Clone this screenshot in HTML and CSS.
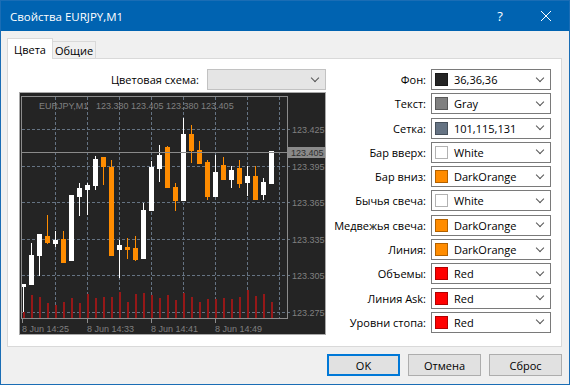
FILE: index.html
```html
<!DOCTYPE html>
<html lang="ru">
<head>
  <meta charset="UTF-8" />
  <meta name="viewport" content="width=device-width, initial-scale=1.0"/>
  <title>Свойства EURJPY,M1</title>
  <link rel="stylesheet" href="styles.css">
</head>
<body>
  <div class="window">
    <div class="titlebar">
      <span class="title">Свойства EURJPY,M1</span>
      <span class="caption-btn">?</span>
      <span class="caption-btn">
        <svg width="10" height="10" viewBox="0 0 10 10"><path d="M0 0L10 10M10 0L0 10" stroke="#fff" stroke-width="1"/></svg>
      </span>
    </div>

    <div class="content">
      <div class="tabs">
        <div class="tab active">Цвета</div>
        <div class="tab">Общие</div>
      </div>

      <div class="panel">
        <div class="left">
          <div class="scheme">
            <span>Цветовая схема:</span>
            <div class="combo disabled"><span class="value"></span></div>
          </div>
          <div class="chart">
            <svg id="chart" width="305" height="241" viewBox="20 93 305 241"></svg>
          </div>
        </div>

        <div class="colors">
          <label>Фон:</label>
          <div class="combo"><span class="swatch sw-bg"></span><span class="value">36,36,36</span></div>
          <label>Текст:</label>
          <div class="combo"><span class="swatch sw-gray"></span><span class="value">Gray</span></div>
          <label>Сетка:</label>
          <div class="combo"><span class="swatch sw-grid"></span><span class="value">101,115,131</span></div>
          <label>Бар вверх:</label>
          <div class="combo"><span class="swatch sw-white"></span><span class="value">White</span></div>
          <label>Бар вниз:</label>
          <div class="combo"><span class="swatch sw-orange"></span><span class="value">DarkOrange</span></div>
          <label>Бычья свеча:</label>
          <div class="combo"><span class="swatch sw-white"></span><span class="value">White</span></div>
          <label>Медвежья свеча:</label>
          <div class="combo"><span class="swatch sw-orange"></span><span class="value">DarkOrange</span></div>
          <label>Линия:</label>
          <div class="combo"><span class="swatch sw-orange"></span><span class="value">DarkOrange</span></div>
          <label>Объемы:</label>
          <div class="combo"><span class="swatch sw-red"></span><span class="value">Red</span></div>
          <label>Линия Ask:</label>
          <div class="combo"><span class="swatch sw-red"></span><span class="value">Red</span></div>
          <label>Уровни стопа:</label>
          <div class="combo"><span class="swatch sw-red"></span><span class="value">Red</span></div>
        </div>
      </div>

      <div class="buttons">
        <button class="default">OK</button>
        <button>Отмена</button>
        <button>Сброс</button>
      </div>
    </div>
  </div>

  <script>
    const NS = 'http://www.w3.org/2000/svg';
    const svg = document.getElementById('chart');

    // y in chart pixels: [high, bodyTop, bodyBottom, low, bullish]
    const bars = [
      [284, 284, 287, 312, 1], [243, 255, 285, 285, 1], [234, 234, 256, 276, 1], [215, 236, 243, 244, 0],
      [231, 240, 244, 247, 1], [231, 239, 263, 263, 0], [195, 195, 261, 261, 1], [183, 188, 197, 216, 1],
      [183, 185, 190, 215, 1], [156, 159, 186, 190, 1], [157, 157, 167, 185, 0], [160, 167, 256, 256, 0],
      [240, 245, 250, 278, 1], [238, 247, 250, 259, 0], [236, 248, 260, 261, 0], [203, 210, 259, 259, 1],
      [161, 167, 211, 211, 1], [145, 155, 169, 182, 1], [146, 147, 188, 188, 0], [183, 187, 201, 211, 0],
      [118, 134, 201, 201, 1], [125, 134, 151, 163, 0], [141, 150, 164, 164, 0], [160, 162, 197, 200, 0],
      [155, 172, 197, 197, 1], [157, 165, 180, 180, 0], [166, 170, 180, 188, 1], [160, 168, 184, 188, 0],
      [166, 176, 183, 196, 1], [166, 176, 200, 200, 0], [178, 182, 195, 200, 1], [151, 151, 184, 184, 1]
    ];

    const volumes = [312, 295, 297, 303, 305, 302, 298, 303, 294, 298, 297, 297, 292, 302, 294, 293,
                     295, 298, 295, 300, 293, 297, 302, 299, 299, 298, 299, 297, 290, 296, 294, 302];

    const levels = [
      [129, '123.425'], [165.6, '123.395'], [202.2, '123.365'],
      [238.8, '123.335'], [275.4, '123.305'], [312, '123.275']
    ];

    const times = [[22, '8 Jun 14:25'], [87, '8 Jun 14:33'], [151, '8 Jun 14:41'], [215, '8 Jun 14:49']];

    function add(parent, tag, attrs, text) {
      const node = document.createElementNS(NS, tag);
      for (const key in attrs) node.setAttribute(key, attrs[key]);
      if (text) node.textContent = text;
      parent.appendChild(node);
      return node;
    }

    const defs = add(svg, 'defs', {});
    const clip = add(defs, 'clipPath', { id: 'plot' });
    add(clip, 'rect', { x: 22, y: 97, width: 265, height: 221 });

    // grid
    const grid = add(svg, 'g', { stroke: '#657383', 'stroke-dasharray': '3 2', 'stroke-width': 1 });
    levels.forEach(([y]) => {
      const py = Math.round(y) + 0.5;
      add(grid, 'line', { x1: 22, x2: 292, y1: py, y2: py });
    });
    for (let i = 4; i < 36; i += 4) {
      const px = 23.5 + i * 8;
      add(grid, 'line', { x1: px, x2: px, y1: 97, y2: 318 });
    }

    const plot = add(svg, 'g', { 'clip-path': 'url(#plot)' });

    volumes.forEach((top, i) => {
      add(plot, 'rect', { x: 23 + i * 8, y: top, width: 2, height: 319 - top, fill: '#961818' });
    });

    bars.forEach(([hi, top, bot, lo, up], i) => {
      const x = 21 + i * 8;
      const color = up ? '#ffffff' : '#ff8c00';
      add(plot, 'rect', { x: x + 2, y: hi, width: 1, height: lo - hi, fill: color });
      add(plot, 'rect', { x: x, y: top, width: 5, height: Math.max(1, bot - top), fill: color });
    });

    // bid line and frame
    add(svg, 'line', { x1: 22, x2: 287, y1: 152.5, y2: 152.5, stroke: '#8a8a8a' });
    add(svg, 'rect', { x: 21.5, y: 96.5, width: 266, height: 222, fill: 'none', stroke: '#8c8c8c' });

    times.forEach(([x]) => {
      add(svg, 'line', { x1: x + 0.5, x2: x + 0.5, y1: 319, y2: 323, stroke: '#8c8c8c' });
    });

    const labels = add(svg, 'g', { 'font-family': 'Liberation Sans, Arial, sans-serif', 'font-size': 9, fill: '#808080' });
    add(labels, 'text', { x: 39, y: 108.5 }, 'EURJPY,M1');
    add(labels, 'text', { x: 96, y: 108.5 }, '123.380 123.405 123.380 123.405');
    levels.forEach(([y, price]) => add(labels, 'text', { x: 292, y: Math.round(y) + 4 }, price));
    times.forEach(([x, t]) => add(labels, 'text', { x: x, y: 331.5 }, t));

    add(svg, 'rect', { x: 288, y: 147, width: 37, height: 11, fill: '#8a8a8a' });
    add(svg, 'text', { x: 291, y: 156, 'font-family': 'Liberation Sans, Arial, sans-serif', 'font-size': 9, fill: '#2e2e2e' }, '123.405');
  </script>
</body>
</html>
```

FILE: styles.css
```css
* {
  box-sizing: border-box;
}

body {
  margin: 0;
  font-family: "Open Sans", "Noto Sans", sans-serif;
  font-size: 11px;
  color: #000;
  background: #f0f0f0;
}

.window {
  width: 570px;
  height: 385px;
  border: 1px solid #1a6db5;
  background: #f0f0f0;
  display: flex;
  flex-direction: column;
}

.titlebar {
  height: 30px;
  background: #0063b1;
  color: #fff;
  display: flex;
  align-items: center;
}

.title {
  flex: 1;
  padding-left: 9px;
  font-size: 11.5px;
}

.caption-btn {
  width: 46px;
  height: 30px;
  display: flex;
  align-items: center;
  justify-content: center;
  font-size: 13px;
}

.content {
  padding: 7px 7px 0 6px;
}

.tabs {
  display: flex;
  align-items: flex-end;
  height: 20px;
}

.tab {
  height: 17px;
  padding: 0 4px;
  border: 1px solid #d9d9d9;
  border-bottom: none;
  border-left: none;
  display: flex;
  align-items: center;
  justify-content: center;
  width: 43px;
}

.tab.active {
  width: 46px;
  height: 21px;
  margin-bottom: -1px;
  border-left: 1px solid #d9d9d9;
  background: #fff;
  position: relative;
  z-index: 1;
}

.panel {
  height: 289px;
  background: #fff;
  border: 1px solid #d9d9d9;
  display: flex;
  padding: 10px 10px 0 11px;
}

.left {
  width: 307px;
}

.scheme {
  height: 21px;
  display: flex;
  justify-content: flex-end;
  align-items: center;
  gap: 8px;
}

.combo {
  width: 120px;
  height: 21px;
  border: 1px solid #7a7a7a;
  background: #fff;
  display: flex;
  align-items: center;
  padding: 0 7px 0 3px;
}

.combo::after {
  content: "";
  width: 5px;
  height: 5px;
  border-right: 1px solid #555;
  border-bottom: 1px solid #555;
  transform: rotate(45deg);
  margin-top: -4px;
}

.combo.disabled {
  width: 119px;
  background: #e5e5e5;
  border-color: #c2c2c2;
}

.value {
  flex: 1;
}

.swatch {
  width: 13px;
  height: 13px;
  margin-right: 6px;
  border: 1px solid rgba(0, 0, 0, 0.3);
}

.sw-bg { background: #242424; }
.sw-gray { background: #808080; }
.sw-grid { background: #657383; }
.sw-white { background: #fff; }
.sw-orange { background: #ff8c00; }
.sw-red { background: #ff0000; }

.chart {
  margin-top: 2px;
  width: 307px;
  height: 243px;
  border: 1px solid #a9a9a9;
  background: #242424;
}

.chart svg {
  display: block;
}

.colors {
  margin-left: auto;
  display: grid;
  grid-template-columns: auto 120px;
  grid-auto-rows: 21px;
  column-gap: 5px;
  row-gap: 3.3px;
  align-items: center;
  align-content: start;
}

.colors label {
  text-align: right;
}

.buttons {
  display: flex;
  justify-content: flex-end;
  gap: 8px;
  margin-top: 7px;
}

button {
  width: 73px;
  height: 22px;
  border: 1px solid #adadad;
  background: #e1e1e1;
  font-family: inherit;
  font-size: 11px;
  color: #000;
  padding: 0;
}

button.default {
  border-color: #0078d7;
  box-shadow: inset 0 0 0 1px #0078d7;
}
```
